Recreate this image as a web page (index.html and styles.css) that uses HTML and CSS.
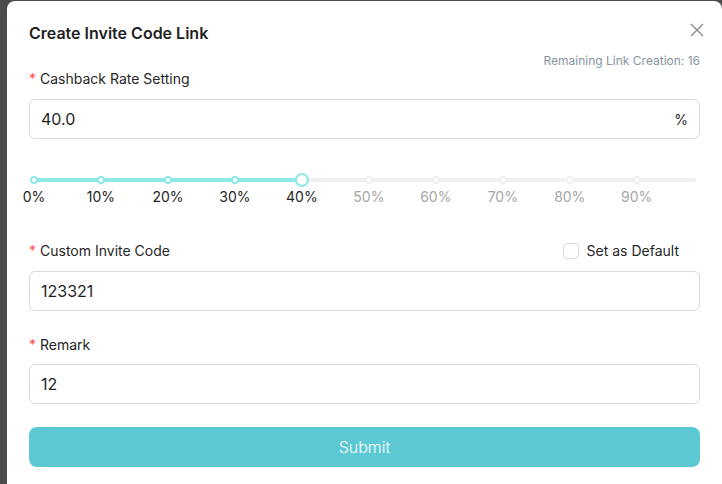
FILE: index.html
```html
<!DOCTYPE html>
<html lang="en">
<head>
    <meta charset="UTF-8">
    <meta name="viewport" content="width=device-width, initial-scale=1.0">
    <title>Create Invite Code Link</title>
    <link rel="stylesheet" href="styles.css">
</head>
<body>

    <div class="modal">
        <!-- Header -->
        <div class="modal-header">
            <h2 class="modal-title">Create Invite Code Link</h2>
            <button class="close-btn" aria-label="Close">
                <svg width="16" height="16" viewBox="0 0 16 16">
                    <path d="M2 2 L14 14 M14 2 L2 14" stroke="#8c8c8c" stroke-width="1.3" fill="none"/>
                </svg>
            </button>
        </div>
        <div class="remaining">Remaining Link Creation: 16</div>

        <!-- Cashback rate -->
        <div class="form-item">
            <div class="form-label"><span class="required">*</span>Cashback Rate Setting</div>
            <div class="input-box">
                <input type="text" value="40.0">
                <span class="suffix">%</span>
            </div>
        </div>

        <div class="slider">
            <div class="slider-rail"></div>
            <div class="slider-track" style="width: 40.4%"></div>
            <div class="slider-marks" id="marks"></div>
        </div>

        <!-- Invite code -->
        <div class="form-item">
            <div class="form-label label-row">
                <span><span class="required">*</span>Custom Invite Code</span>
                <label class="checkbox"><span class="check-box"></span>Set as Default</label>
            </div>
            <div class="input-box">
                <input type="text" value="123321">
            </div>
        </div>

        <!-- Remark -->
        <div class="form-item last">
            <div class="form-label"><span class="required">*</span>Remark</div>
            <div class="input-box">
                <input type="text" value="12">
            </div>
        </div>

        <button class="submit-btn">Submit</button>
    </div>

    <script>
        // Build slider dots and labels, 0% .. 90% on a 0..99 scale
        var marks = document.getElementById('marks');
        var current = 40;
        for (var i = 0; i <= 90; i += 10) {
            var left = (i / 99 * 100) + '%';
            var dot = document.createElement('span');
            dot.className = 'dot' + (i <= current ? ' active' : '') + (i === current ? ' handle' : '');
            dot.style.left = left;
            marks.appendChild(dot);

            var text = document.createElement('span');
            text.className = 'mark-text' + (i <= current ? ' active' : '');
            text.style.left = left;
            text.innerText = i + '%';
            marks.appendChild(text);
        }
    </script>
</body>
</html>
```

FILE: styles.css
```css
/* Page behind the modal */
body {
    margin: 0;
    background-color: #4b4b4b;
    font-family: Inter, "Noto Sans", Arial, sans-serif;
    height: 100vh;
    overflow: hidden;
}

/* Modal box */
.modal {
    margin: 1px 0 0 7px;
    width: 715px;
    height: 483px;
    box-sizing: border-box;
    padding: 20px 22px 0 22px;
    background-color: #fff;
    border-radius: 8px 8px 0 0;
}

.modal-header {
    display: flex;
    justify-content: space-between;
    align-items: flex-start;
}

.modal-title {
    margin: 0;
    font-size: 16px;
    line-height: 24px;
    font-weight: 600;
    color: #1f1f1f;
}

.close-btn {
    border: none;
    background: none;
    padding: 0;
    margin: 1px -5px 0 0;
    width: 16px;
    height: 16px;
    cursor: pointer;
}

.remaining {
    margin-top: 8px;
    text-align: right;
    font-size: 12px;
    line-height: 16px;
    color: #8795a3;
}

/* Form items */
.form-item {
    margin-bottom: 24px;
}

.form-item.last {
    margin-bottom: 23px;
}

.form-label {
    font-size: 14px;
    line-height: 20px;
    color: #262626;
    margin-bottom: 10px;
}

.form-item.last .form-label {
    margin-bottom: 9px;
}

.required {
    color: #ff4d4f;
    margin-right: 4px;
    font-size: 14px;
}

.label-row {
    display: flex;
    justify-content: space-between;
    align-items: center;
}

.checkbox {
    display: flex;
    align-items: center;
    gap: 8px;
    margin-right: 21px;
    color: #262626;
}

.check-box {
    width: 14px;
    height: 14px;
    border: 1px solid #d9d9d9;
    border-radius: 4px;
    background: #fff;
}

.input-box {
    display: flex;
    align-items: center;
    height: 40px;
    box-sizing: border-box;
    border: 1px solid #d9d9d9;
    border-radius: 6px;
    padding: 0 11px;
}

.input-box input {
    flex: 1;
    border: none;
    outline: none;
    padding: 0;
    font-family: inherit;
    font-size: 16px;
    color: #1f1f1f;
    background: transparent;
}

.suffix {
    font-size: 14px;
    color: #262626;
}

/* Slider */
.slider {
    position: relative;
    margin: -24px 4px 34px 4px;
    height: 68px;
}

.slider-rail,
.slider-track {
    position: absolute;
    top: 39px;
    left: 0;
    height: 4px;
    border-radius: 2px;
}

.slider-rail {
    width: 100%;
    background-color: #f0f0f0;
}

.slider-track {
    background-color: #8ce9e6;
}

.slider-marks {
    position: absolute;
    top: 0;
    left: 0;
    right: 0;
    bottom: 0;
}

.dot {
    position: absolute;
    top: 37px;
    width: 4px;
    height: 4px;
    margin-left: -3px;
    border: 2px solid #f0f0f0;
    border-radius: 50%;
    background-color: #fff;
}

.dot.active {
    border-color: #8ce9e6;
}

.dot.handle {
    top: 34px;
    width: 10px;
    height: 10px;
    margin-left: -6px;
}

.mark-text {
    position: absolute;
    top: 48px;
    margin-left: 1px;
    transform: translateX(-50%);
    font-size: 14px;
    line-height: 20px;
    color: #a6a6a6;
    white-space: nowrap;
}

.mark-text.active {
    color: #262626;
}

/* Submit */
.submit-btn {
    display: block;
    width: 100%;
    height: 40px;
    border: none;
    border-radius: 8px;
    background-color: #5bc8d3;
    color: #fff;
    font-family: inherit;
    font-size: 16px;
    font-weight: 300;
    cursor: pointer;
}
```
